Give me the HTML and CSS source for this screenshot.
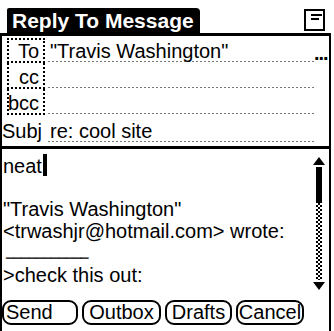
FILE: index.html
```html
<!DOCTYPE html>
<html>
<head>
<meta charset="utf-8">
<link rel="stylesheet" href="styles.css">
</head>
<body>
<div class="screen">
  <header class="titlebar">
    <div class="tab">Reply To Message</div>
    <div class="menu-icon"><span class="l1"></span><span class="l2"></span></div>
  </header>
  <div class="frame">
    <div class="fields">
      <div class="row r-to">
        <div class="label boxed">To</div>
        <div class="value">"Travis Washington"</div>
        <div class="more">...</div>
      </div>
      <div class="row r-cc">
        <div class="label boxed">cc</div>
        <div class="value"></div>
      </div>
      <div class="row r-bcc">
        <div class="label boxed">bcc</div>
        <div class="value"></div>
      </div>
      <div class="row r-subj">
        <div class="label plain">Subj</div>
        <div class="value">re: cool site</div>
      </div>
    </div>
    <div class="divider"></div>
    <div class="editor">
      <div class="text">
        <div class="line">neat<span class="caret"></span></div>
        <div class="line">&nbsp;</div>
        <div class="line">"Travis Washington"</div>
        <div class="line">&lt;trwashjr@hotmail.com&gt; wrote:</div>
        <div class="line sep">___________</div>
        <div class="line">&gt;check this out:</div>
      </div>
      <div class="scroll">
        <div class="up"></div>
        <div class="thumb"></div>
        <div class="track"></div>
        <div class="down"></div>
      </div>
    </div>
    <div class="buttons">
      <div class="btn b-send">Send</div>
      <div class="btn b-outbox">Outbox</div>
      <div class="btn b-drafts">Drafts</div>
      <div class="btn b-cancel">Cancel</div>
    </div>
  </div>
</div>
</body>
</html>
```
FILE: styles.css
```css
* { box-sizing: border-box; margin: 0; padding: 0; }
html, body { width: 334px; height: 331px; background: #fff; overflow: hidden; }
body { font-family: "Liberation Sans", Arial, sans-serif; font-size: 20px; color: #000; }

.screen { width: 334px; height: 331px; display: flex; flex-direction: column; }

.titlebar { height: 36px; width: 331px; border-bottom: 3px solid #000; display: flex; align-items: flex-start; flex: none; }
.tab { margin: 8px 0 0 7px; height: 25px; width: 193px; background: #000; color: #fff; font-weight: bold; font-size: 21px; line-height: 25px; padding-left: 5px; border-radius: 2px 4px 0 0; white-space: nowrap; }
.menu-icon { margin: 9px 6px 0 auto; width: 21px; height: 22px; border: 2px solid #000; display: flex; flex-direction: column; padding: 3px 0 0 5px; gap: 2px; }
.menu-icon span { display: block; height: 2px; background: #000; }
.menu-icon .l1 { width: 11px; }
.menu-icon .l2 { width: 8px; }

.frame { width: 331px; flex: 1; border-left: 2px solid #000; border-right: 2px solid #000; display: flex; flex-direction: column; }

.row { display: flex; align-items: stretch; flex: none; }
.r-to { height: 27px; }
.r-cc, .r-bcc { height: 26px; }
.r-subj { height: 31px; }

.label { flex: none; display: flex; justify-content: flex-end; align-items: flex-end; line-height: 20px; white-space: nowrap; }
.label.boxed { width: 38px; margin-left: 5px; margin-right: 3px; padding-right: 4px; border: 2px dotted #000; border-top: none; }
.r-to .label.boxed { margin-top: 2px; border-top: 2px dotted #000; }
.label.plain { width: 46px; justify-content: flex-start; padding-bottom: 1px; margin-bottom: 4px; }

.value { flex: none; width: 266px; display: flex; align-items: flex-end; padding: 0 0 1px 2px; line-height: 20px; margin-bottom: 1px; white-space: nowrap;
  background: repeating-linear-gradient(90deg, #777 0 2px, transparent 2px 4px) left bottom / 100% 1px no-repeat; }
.r-subj .value { margin-bottom: 4px; }
.more { flex: none; width: 15px; align-self: flex-end; line-height: 20px; letter-spacing: -1px; white-space: nowrap; font-weight: bold; }

.divider { height: 3px; background: #000; flex: none; }

.editor { height: 151px; display: flex; flex: none; }
.text { flex: 1; padding: 5px 0 0 1px; line-height: 22px; white-space: nowrap; }
.line { height: 22px; }
.caret { display: inline-block; width: 4px; height: 22px; background: #000; vertical-align: -3px; margin-left: 1px; }
.line.sep { font-size: 14px; font-weight: bold; line-height: 18px; padding-left: 3px; letter-spacing: -0.3px; text-shadow: 0 1px 0 #000, 0 0.5px 0 #000; }

.scroll { flex: none; width: 12px; margin-right: 4px; display: flex; flex-direction: column; align-items: center; padding-top: 8px; }
.up { width: 0; height: 0; border-left: 6px solid transparent; border-right: 6px solid transparent; border-bottom: 8px solid #000; }
.thumb { width: 6px; height: 36px; margin-top: 2px; background: #000; }
.track { width: 6px; height: 77px; background: repeating-conic-gradient(#000 0 25%, #fff 0 50%) 0 0 / 4px 4px; }
.down { margin-top: 2px; width: 0; height: 0; border-left: 6px solid transparent; border-right: 6px solid transparent; border-top: 8px solid #000; }

.buttons { display: flex; gap: 4px; height: 31px; flex: none; }
.btn { height: 25px; border: 2px solid #000; border-radius: 9px; line-height: 21px; text-align: center; white-space: nowrap; }
.b-send { width: 76px; text-align: left; padding-left: 2px; }
.b-outbox { width: 79px; }
.b-drafts { width: 67px; }
.b-cancel { width: 68px; }
```
